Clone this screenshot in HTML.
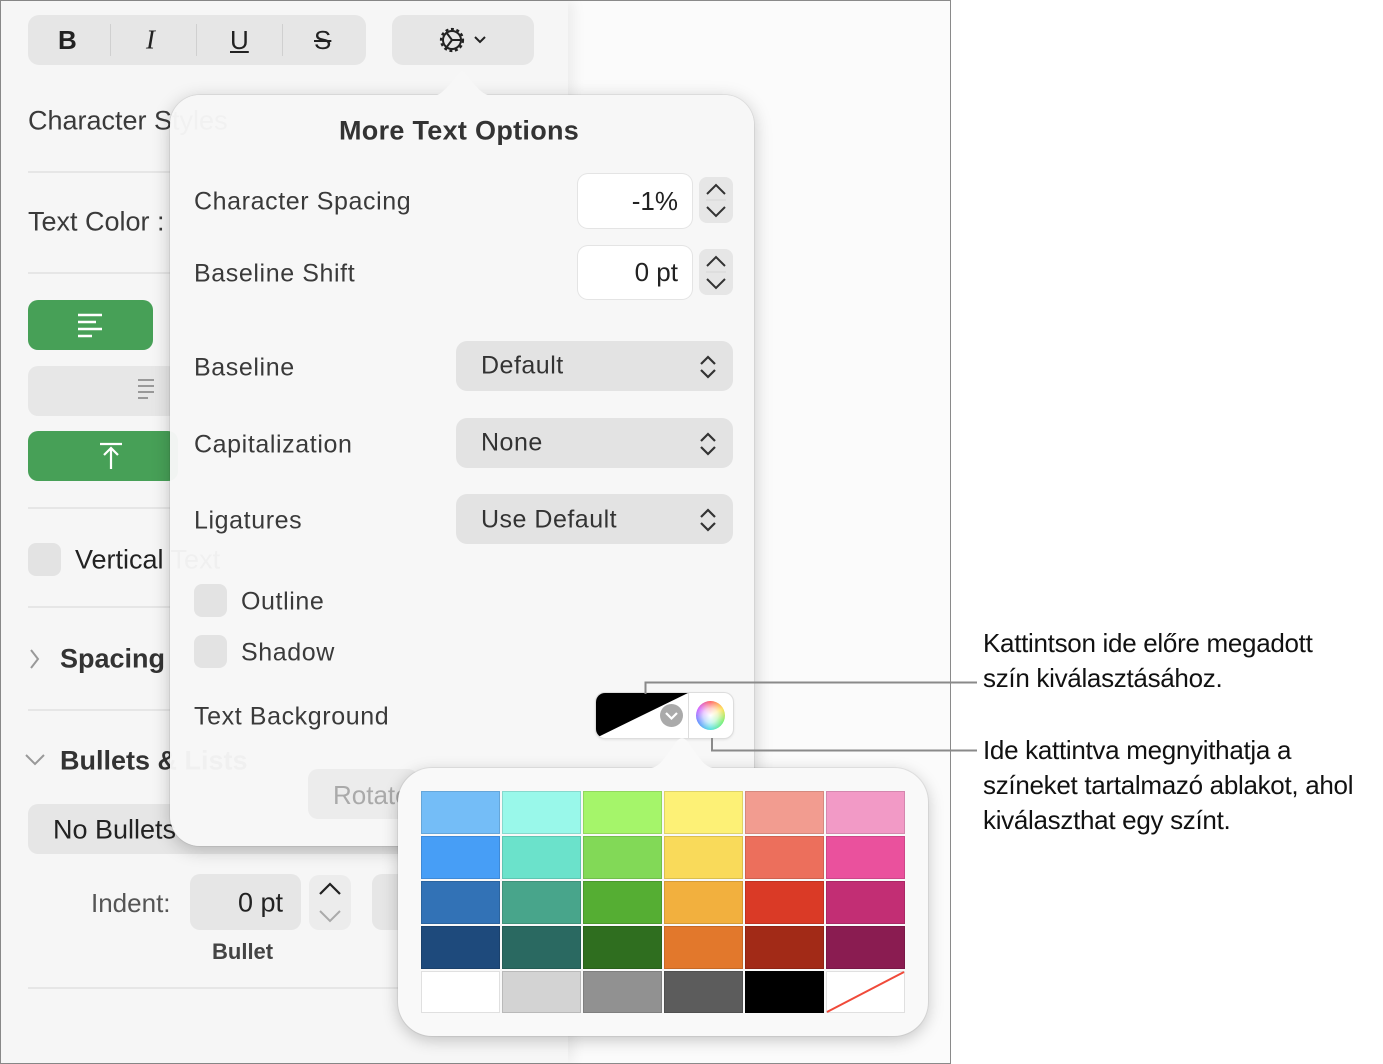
<!DOCTYPE html>
<html><head><meta charset="utf-8"><style>
*{box-sizing:border-box;margin:0;padding:0}
body{width:1383px;height:1064px;background:#fff;position:relative;overflow:hidden;font-family:"Liberation Sans",sans-serif;color:#333}
.a{position:absolute}
.t{position:absolute;white-space:nowrap;line-height:1;transform:translateY(-50%)}
.frame{left:0;top:0;width:951px;height:1064px;border:1.5px solid #8a8a8a;background:#fbfbfb}
.side{left:1px;top:1px;width:567px;height:1062px;background:#f6f6f6;box-shadow:6px 0 12px rgba(0,0,0,.06)}
.div{position:absolute;left:28px;height:2px;background:#e6e6e6}
.pop{left:170px;top:95px;width:584px;height:751px;background:rgba(247,247,247,.97);border-radius:30px;box-shadow:0 4px 18px rgba(0,0,0,.22),0 0 0 1px rgba(0,0,0,.06)}
.lbl{font-size:25px;color:#3a3a3a;letter-spacing:.6px}
.fld{position:absolute;background:#fff;border-radius:10px;box-shadow:0 0 0 1px #e4e4e4;font-size:26px;color:#222;text-align:right;padding-right:14px}
.stp{position:absolute;background:#e6e6e6;border-radius:8px}
.pu{position:absolute;left:456px;width:277px;height:50px;background:#e3e3e3;border-radius:11px;font-size:25px;color:#333;letter-spacing:.5px}
.cb{position:absolute;width:33px;height:33px;border-radius:8px;background:#e3e3e3}
.sw{position:absolute;border:1px solid rgba(0,0,0,.12)}
.ann{font-size:26px;color:#111;letter-spacing:-.3px}
</style></head><body>
<div class="a frame"></div>
<div class="a side"></div>

<!-- toolbar -->
<div class="a" style="left:28px;top:15px;width:338px;height:50px;background:#e6e6e6;border-radius:11px"></div>
<div class="a" style="left:110px;top:24px;width:1px;height:32px;background:#d0d0d0"></div>
<div class="a" style="left:196px;top:24px;width:1px;height:32px;background:#d0d0d0"></div>
<div class="a" style="left:282px;top:24px;width:1px;height:32px;background:#d0d0d0"></div>
<div class="t" style="left:58px;top:40px;font-size:26px;font-weight:bold;color:#222">B</div>
<div class="t" style="left:146px;top:40px;font-size:27px;font-style:italic;color:#222;font-family:'Liberation Serif',serif">I</div>
<div class="t" style="left:230px;top:40px;font-size:26px;text-decoration:underline;color:#222">U</div>
<div class="t" style="left:314px;top:40px;font-size:26px;text-decoration:line-through;color:#222">S</div>
<div class="a" style="left:392px;top:15px;width:142px;height:50px;background:#e6e6e6;border-radius:11px"></div>
<svg class="a" style="left:436px;top:24px" width="56" height="32" viewBox="0 0 56 32">
<circle cx="16" cy="16" r="11" fill="none" stroke="#222" stroke-width="2.2" stroke-dasharray="3 2.6"/>
<circle cx="16" cy="16" r="9" fill="none" stroke="#222" stroke-width="2"/>
<path d="M16 16 L10 8 M16 16 L25 16 M16 16 L10 24" stroke="#222" stroke-width="2" fill="none"/>
<path d="M39 13 L44 18 L49 13" stroke="#222" stroke-width="2" fill="none"/>
</svg>

<!-- sidebar content -->
<div class="t" style="left:28px;top:121px;font-size:27px;color:#3a3a3a">Character Styles</div>
<div class="div" style="top:171px;width:520px"></div>
<div class="t" style="left:28px;top:222px;font-size:27px;color:#3a3a3a">Text Color :</div>
<div class="div" style="top:272px;width:520px"></div>
<div class="a" style="left:28px;top:300px;width:125px;height:50px;background:#47a057;border-radius:10px"></div>
<svg class="a" style="left:76px;top:312px" width="28" height="26"><path d="M2 3h24M2 10h18M2 17h24M2 24h14" stroke="#fff" stroke-width="2.4"/></svg>
<div class="a" style="left:28px;top:366px;width:150px;height:50px;background:#e7e7e7;border-radius:10px"></div>
<svg class="a" style="left:136px;top:376px" width="30" height="28"><path d="M2 4h16M2 10h16M2 16h16M2 22h10" stroke="#999" stroke-width="2"/></svg>
<div class="a" style="left:28px;top:431px;width:150px;height:50px;background:#47a057;border-radius:10px"></div>
<svg class="a" style="left:98px;top:441px" width="28" height="30"><path d="M2 3h22M13 28V8M6 14l7-7 7 7" stroke="#fff" stroke-width="2.2" fill="none"/></svg>
<div class="div" style="top:507px;width:520px"></div>
<div class="cb" style="left:28px;top:543px"></div>
<div class="t" style="left:75px;top:560px;font-size:27px;color:#222">Vertical Text</div>
<div class="div" style="top:606px;width:520px"></div>
<svg class="a" style="left:29px;top:648px" width="12" height="22"><path d="M2 2l7 9-7 9" stroke="#999" stroke-width="2" fill="none"/></svg>
<div class="t" style="left:60px;top:659px;font-size:27px;font-weight:bold;color:#333">Spacing</div>
<div class="div" style="top:709px;width:520px"></div>
<svg class="a" style="left:24px;top:753px" width="22" height="14"><path d="M2 2l9 9 9-9" stroke="#999" stroke-width="2" fill="none"/></svg>
<div class="t" style="left:60px;top:761px;font-size:27px;font-weight:bold;color:#333">Bullets &amp; Lists</div>
<div class="a" style="left:28px;top:804px;width:400px;height:50px;background:#e6e6e6;border-radius:10px"></div>
<div class="t" style="left:53px;top:830px;font-size:27px;color:#222">No Bullets</div>
<div class="t" style="left:91px;top:903px;font-size:26px;color:#555">Indent:</div>
<div class="a" style="left:190px;top:874px;width:111px;height:56px;background:#e6e6e6;border-radius:10px"></div>
<div class="t" style="left:238px;top:903px;font-size:27px;color:#222">0 pt</div>
<div class="a" style="left:309px;top:875px;width:42px;height:55px;background:#ececec;border-radius:10px"></div>
<svg class="a" style="left:316px;top:878px" width="28" height="50"><path d="M4 16l10-10 10 10" stroke="#222" stroke-width="2.2" fill="none"/><path d="M4 33l10 10 10-10" stroke="#aaa" stroke-width="2" fill="none"/></svg>
<div class="a" style="left:372px;top:874px;width:40px;height:56px;background:#e6e6e6;border-radius:10px"></div>
<div class="t" style="left:212px;top:952px;font-size:22px;font-weight:bold;color:#444">Bullet</div>
<div class="div" style="top:987px;width:520px"></div>

<!-- main popover -->
<div class="a pop"></div>
<svg class="a" style="left:420px;top:66px" width="90" height="32"><path d="M0 31 C18 31 20 29 30 18 L38 8 C41 4 43 4 46 8 L54 18 C64 29 66 31 90 31 Z" fill="#f7f7f7"/></svg>
<div class="a" style="left:308px;top:769px;width:110px;height:50px;background:#ececec;border-radius:10px"></div>
<div class="t" style="left:333px;top:795px;font-size:26px;color:#aaa">Rotate</div>
<div class="t" style="left:339px;top:131px;font-size:27px;font-weight:bold;color:#333;letter-spacing:.3px">More Text Options</div>
<div class="t lbl" style="left:194px;top:202px">Character Spacing</div>
<div class="fld" style="left:578px;top:174px;width:114px;height:54px;line-height:54px">-1%</div>
<div class="stp" style="left:699px;top:177px;width:34px;height:46px"></div>
<svg class="a" style="left:701px;top:177px" width="30" height="46"><path d="M6 17l9-9 9 9" stroke="#333" stroke-width="2" fill="none"/><path d="M6 30l9 9 9-9" stroke="#333" stroke-width="2" fill="none"/><path d="M5 23h20" stroke="#d5d5d5"/></svg>
<div class="t lbl" style="left:194px;top:274px">Baseline Shift</div>
<div class="fld" style="left:578px;top:246px;width:114px;height:53px;line-height:53px">0 pt</div>
<div class="stp" style="left:699px;top:249px;width:34px;height:46px"></div>
<svg class="a" style="left:701px;top:249px" width="30" height="46"><path d="M6 17l9-9 9 9" stroke="#333" stroke-width="2" fill="none"/><path d="M6 30l9 9 9-9" stroke="#333" stroke-width="2" fill="none"/><path d="M5 23h20" stroke="#d5d5d5"/></svg>

<div class="t lbl" style="left:194px;top:368px">Baseline</div>
<div class="pu" style="top:341px"><span class="t" style="left:25px;top:25px">Default</span></div>
<div class="t lbl" style="left:194px;top:445px">Capitalization</div>
<div class="pu" style="top:418px"><span class="t" style="left:25px;top:25px">None</span></div>
<div class="t lbl" style="left:194px;top:521px">Ligatures</div>
<div class="pu" style="top:494px"><span class="t" style="left:25px;top:26px">Use Default</span></div>
<svg class="a" style="left:698px;top:354px" width="20" height="26"><path d="M3 10l7-7 7 7M3 16l7 7 7-7" stroke="#333" stroke-width="2.2" fill="none"/></svg>
<svg class="a" style="left:698px;top:431px" width="20" height="26"><path d="M3 10l7-7 7 7M3 16l7 7 7-7" stroke="#333" stroke-width="2.2" fill="none"/></svg>
<svg class="a" style="left:698px;top:507px" width="20" height="26"><path d="M3 10l7-7 7 7M3 16l7 7 7-7" stroke="#333" stroke-width="2.2" fill="none"/></svg>

<div class="cb" style="left:194px;top:584px"></div>
<div class="t lbl" style="left:241px;top:602px">Outline</div>
<div class="cb" style="left:194px;top:635px"></div>
<div class="t lbl" style="left:241px;top:653px">Shadow</div>
<div class="t lbl" style="left:194px;top:717px">Text Background</div>

<!-- well -->
<div class="a" style="left:596px;top:693px;width:137px;height:45px;background:#fff;border-radius:9px;box-shadow:0 0 0 1px #ddd,0 1px 3px rgba(0,0,0,.15);overflow:hidden">
<svg class="a" style="left:0;top:0" width="92" height="45"><path d="M0 0H92L0 45Z" fill="#000"/></svg>
<div class="a" style="left:92px;top:0;width:1px;height:45px;background:#ddd"></div>
<div class="a" style="left:64px;top:11px;width:23px;height:23px;border-radius:50%;background:#aaa"></div>
<svg class="a" style="left:64px;top:11px" width="23" height="23"><path d="M6 9l5.5 5.5L17 9" stroke="#fff" stroke-width="2.2" fill="none"/></svg>
<div class="a" style="left:100px;top:8px;width:29px;height:29px;border-radius:50%;background:conic-gradient(#f55,#fd4,#6e6,#4dd,#58f,#c5f,#f55)"></div>
<div class="a" style="left:100px;top:8px;width:29px;height:29px;border-radius:50%;background:radial-gradient(circle,#fff 0,rgba(255,255,255,.7) 35%,rgba(255,255,255,0) 75%)"></div>
</div>

<!-- swatch popover -->
<div class="a" style="left:398px;top:768px;width:530px;height:268px;background:#f9f9f9;border-radius:34px;box-shadow:0 4px 16px rgba(0,0,0,.22),0 0 0 1px rgba(0,0,0,.06)"></div>
<svg class="a" style="left:640px;top:734px" width="84" height="36"><path d="M0 35 C14 35 18 33 26 22 L36 8 C40 3 44 3 48 8 L58 22 C66 33 70 35 84 35 Z" fill="#f9f9f9"/></svg>
<div class="a" style="left:421px;top:791px;width:484px;height:222px">
<div class="sw" style="left:0;top:0;width:79px;height:43px;background:#74bdf7"></div>
<div class="sw" style="left:81px;top:0;width:79px;height:43px;background:#99f8ea"></div>
<div class="sw" style="left:162px;top:0;width:79px;height:43px;background:#a5f56a"></div>
<div class="sw" style="left:243px;top:0;width:79px;height:43px;background:#fdf176"></div>
<div class="sw" style="left:324px;top:0;width:79px;height:43px;background:#f29c90"></div>
<div class="sw" style="left:405px;top:0;width:79px;height:43px;background:#f29ac6"></div>
<div class="sw" style="left:0;top:45px;width:79px;height:43px;background:#479ef6"></div>
<div class="sw" style="left:81px;top:45px;width:79px;height:43px;background:#6be2cb"></div>
<div class="sw" style="left:162px;top:45px;width:79px;height:43px;background:#82d957"></div>
<div class="sw" style="left:243px;top:45px;width:79px;height:43px;background:#f9da5a"></div>
<div class="sw" style="left:324px;top:45px;width:79px;height:43px;background:#ec6f5c"></div>
<div class="sw" style="left:405px;top:45px;width:79px;height:43px;background:#ea519d"></div>
<div class="sw" style="left:0;top:90px;width:79px;height:43px;background:#3272b6"></div>
<div class="sw" style="left:81px;top:90px;width:79px;height:43px;background:#48a58b"></div>
<div class="sw" style="left:162px;top:90px;width:79px;height:43px;background:#55ae33"></div>
<div class="sw" style="left:243px;top:90px;width:79px;height:43px;background:#f2b03e"></div>
<div class="sw" style="left:324px;top:90px;width:79px;height:43px;background:#da3a26"></div>
<div class="sw" style="left:405px;top:90px;width:79px;height:43px;background:#c22e74"></div>
<div class="sw" style="left:0;top:135px;width:79px;height:43px;background:#1e4a7c"></div>
<div class="sw" style="left:81px;top:135px;width:79px;height:43px;background:#2a6961"></div>
<div class="sw" style="left:162px;top:135px;width:79px;height:43px;background:#2f6e1f"></div>
<div class="sw" style="left:243px;top:135px;width:79px;height:43px;background:#e2782c"></div>
<div class="sw" style="left:324px;top:135px;width:79px;height:43px;background:#a22a17"></div>
<div class="sw" style="left:405px;top:135px;width:79px;height:43px;background:#8a1c51"></div>
<div class="sw" style="left:0;top:180px;width:79px;height:42px;background:#fff"></div>
<div class="sw" style="left:81px;top:180px;width:79px;height:42px;background:#d3d3d3"></div>
<div class="sw" style="left:162px;top:180px;width:79px;height:42px;background:#919191"></div>
<div class="sw" style="left:243px;top:180px;width:79px;height:42px;background:#5c5c5c"></div>
<div class="sw" style="left:324px;top:180px;width:79px;height:42px;background:#000"></div>
<div class="sw" style="left:405px;top:180px;width:79px;height:42px;background:#fff"></div>
<svg class="a" style="left:405px;top:180px" width="79" height="42"><path d="M1 41L78 1" stroke="#f04a3a" stroke-width="2"/></svg>
</div>

<!-- callouts -->
<svg class="a" style="left:0;top:0" width="1383" height="1064" pointer-events="none">
<path d="M645.5 694V682.5H977" stroke="#8a8a8a" stroke-width="2" fill="none"/>
<path d="M712 738V750.5H977" stroke="#8a8a8a" stroke-width="2" fill="none"/>
</svg>
<div class="t ann" style="left:983px;top:643px">Kattintson ide előre megadott</div>
<div class="t ann" style="left:983px;top:678px">szín kiválasztásához.</div>
<div class="t ann" style="left:983px;top:750px">Ide kattintva megnyithatja a</div>
<div class="t ann" style="left:983px;top:785px">színeket tartalmazó ablakot, ahol</div>
<div class="t ann" style="left:983px;top:820px">kiválaszthat egy színt.</div>
</body></html>
